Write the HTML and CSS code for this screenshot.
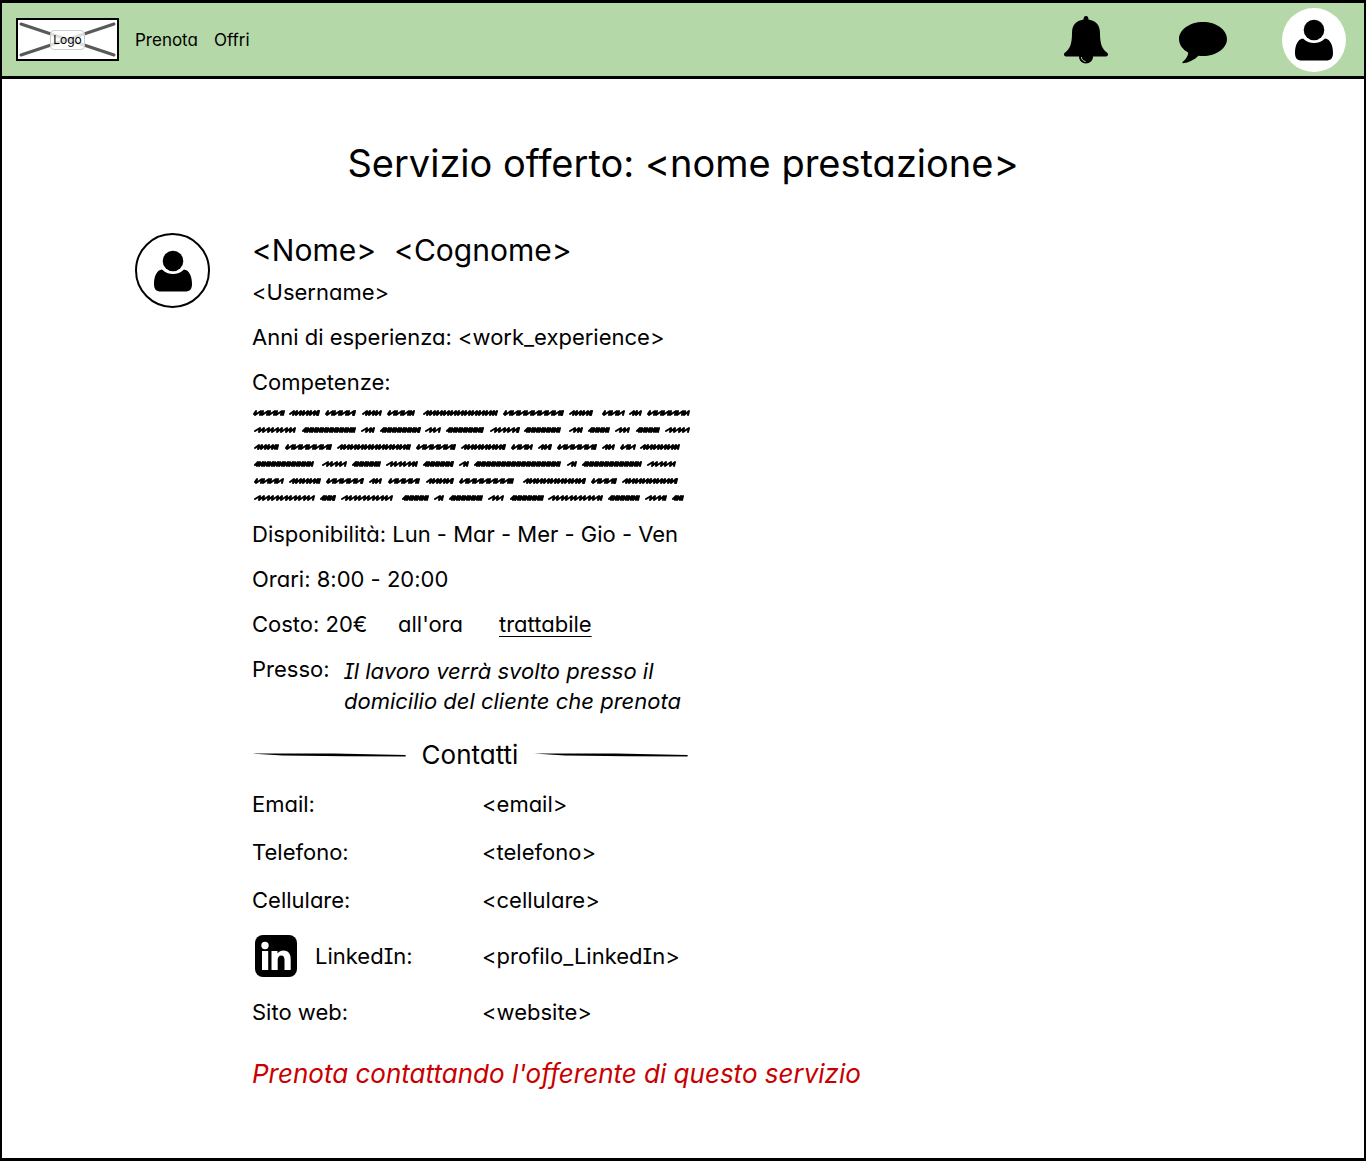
FILE: index.html
```html
<!DOCTYPE html>
<html lang="it">
<head>
<meta charset="utf-8">
<meta name="viewport" content="width=device-width, initial-scale=1">
<title>Servizio offerto</title>
<link rel="stylesheet" href="styles.css">
</head>
<body>
<svg class="symbols" aria-hidden="true">
  <symbol id="user" viewBox="0 0 38 42">
    <circle cx="19" cy="11" r="10.300"/>
    <path d="M8 19.500C11 22.500 15 24 19 24s8-1.500 11-4.500c5 .5 8 6.500 8 14.500 0 5-2 7.500-7 7.500H7c-5 0-7-2.500-7-7.500 0-8 3-14 8-14.500z"/>
  </symbol>
</svg>
<div class="page">
  <header class="topbar">
    <a class="logo" href="#" aria-label="Logo">
      <svg class="logo-cross" viewBox="0 0 99 39" preserveAspectRatio="none" aria-hidden="true"><path d="M3 4 96 35M3 35 96 4"/></svg>
      <span class="logo-text">Logo</span>
    </a>
    <nav class="nav">
      <a href="#">Prenota</a>
      <a href="#">Offri</a>
    </nav>
    <div class="actions">
      <button type="button" class="alerts" aria-label="Notifiche">
        <svg width="44" height="48" viewBox="0 0 44 48"><path d="M22 0c1.500 0 2.500 1 2.500 3.500C32 5 36 9 36 17c0 11 2 16 7.500 20 1 1.500.5 3.500-1.500 3.500H29c0 4-3 7-7 7s-7-3-7-7H2C0 40.500-.5 38.500.5 37 6 33 8 28 8 17 8 9 12 5 19.500 3.500 19.500 1 20.500 0 22 0z"/><path class="bell-line" d="M17.500 41c0 2.500 1.500 4 4 4.500"/></svg>
      </button>
      <button type="button" class="messages" aria-label="Messaggi">
        <svg width="48" height="42" viewBox="0 0 48 42"><path d="M24 0c13.300 0 24 7.600 24 17S37.300 34 24 34c-1.500 0-3 0-4.500-.3C15 38 10 40.500 4 41.200c-.8 0-.8-.9-.2-1.500C7 37 9 34.500 9.200 30.500 3.500 27.500 0 22.500 0 17 0 7.600 10.700 0 24 0z"/></svg>
      </button>
      <button type="button" class="account" aria-label="Profilo">
        <svg width="38" height="42"><use href="#user"/></svg>
      </button>
    </div>
  </header>

  <main class="main">
    <h1>Servizio offerto: &lt;nome prestazione&gt;</h1>
    <article class="profile">
      <div class="avatar"><svg width="38" height="42"><use href="#user"/></svg></div>
      <div class="details">
        <h2 class="name"><span>&lt;Nome&gt;</span><span>&lt;Cognome&gt;</span></h2>
        <p>&lt;Username&gt;</p>
        <p>Anni di esperienza: &lt;work_experience&gt;</p>
        <p>Competenze:</p>
        <svg class="scribble" viewBox="0 0 438 94" role="img" aria-label="Descrizione delle competenze"><path id="scribble-lines"/></svg>
        <p>Disponibilità: Lun - Mar - Mer - Gio - Ven</p>
        <p>Orari: 8:00 - 20:00</p>
        <p class="cost"><span>Costo: 20€</span><span>all'ora</span><a href="#">trattabile</a></p>
        <div class="place"><span>Presso:</span><em>Il lavoro verrà svolto presso il<br>domicilio del cliente che prenota</em></div>
        <h3 class="divider">
          <svg viewBox="0 0 150 4" preserveAspectRatio="none" aria-hidden="true"><path d="M0 .5 80 .6 150 2V3.500L90 3.200 30 2.500z"/></svg>
          <span>Contatti</span>
          <svg viewBox="0 0 150 4" preserveAspectRatio="none" aria-hidden="true"><path d="M0 .5 80 .6 150 2V3.500L90 3.200 30 2.500z"/></svg>
        </h3>
        <dl class="contacts">
          <dt>Email:</dt><dd>&lt;email&gt;</dd>
          <dt>Telefono:</dt><dd>&lt;telefono&gt;</dd>
          <dt>Cellulare:</dt><dd>&lt;cellulare&gt;</dd>
          <dt class="linkedin"><svg width="42" height="42" viewBox="0 0 42 42" aria-hidden="true"><rect width="42" height="42" rx="8"/><g fill="#fff"><circle cx="10" cy="10.500" r="3.700"/><path d="M7 16h6.200v19H7zM16.500 16h6v2.600c1.400-2 3.400-3.100 6-3.100 4.500 0 7.200 3 7.200 8.500v11h-6.200V24.800c0-2.800-1-4.400-3.200-4.400-2.300 0-3.600 1.700-3.600 4.400V35h-6.200z"/></g></svg>LinkedIn:</dt><dd>&lt;profilo_LinkedIn&gt;</dd>
          <dt>Sito web:</dt><dd>&lt;website&gt;</dd>
        </dl>
        <p class="notice">Prenota contattando l'offerente di questo servizio</p>
      </div>
    </article>
  </main>
</div>
<script src="scribble.js"></script>
</body>
</html>
```
FILE: styles.css
```css
* { box-sizing: border-box; }
body {
  margin: 0;
  background: #fff;
  color: #000;
  font: 22px/30px Inter, "Open Sans", sans-serif;
  font-feature-settings: "cv11", "cv08", "calt" 0;
  font-optical-sizing: none;
  font-variant-ligatures: none;
}
h1, h2, h3, p, dl, dd { margin: 0; font-weight: 400; }
a { color: inherit; text-decoration: none; }
svg { display: block; }
.symbols { position: absolute; width: 0; height: 0; }

.page {
  min-height: 100vh;
  border: 2px solid #000;
  border-top-width: 3px;
  border-bottom-width: 3px;
}
.topbar {
  display: flex;
  align-items: center;
  gap: 16px;
  height: 76px;
  padding: 0 18px 0 14px;
  background: #b5d8a8;
  border-bottom: 3px solid #000;
}
.logo {
  display: grid;
  place-items: center;
  width: 103px;
  height: 43px;
  background: #fff;
  border: 2px solid #000;
}
.logo > * { grid-area: 1 / 1; }
.logo-cross {
  width: 100%;
  height: 39px;
  fill: none;
  stroke: #595959;
  stroke-width: 3;
  stroke-linecap: round;
}
.logo-text {
  position: relative;
  padding: 0 2px;
  border: 1px solid #ccc;
  border-radius: 4px;
  background: rgba(255, 255, 255, .8);
  font-size: 12px;
  line-height: 18px;
}
.nav { display: flex; gap: 16px; font-size: 17px; }
.actions {
  display: flex;
  align-items: center;
  gap: 55px;
  margin-left: auto;
}
.actions button {
  display: grid;
  place-items: center;
  padding: 0;
  border: 0;
  background: none;
  color: inherit;
  cursor: pointer;
}
.actions .alerts { margin-right: 16px; }
.actions .messages { padding-top: 6px; }
.actions .account {
  width: 64px;
  height: 64px;
  border-radius: 50%;
  background: #fff;
}
.bell-line { fill: none; stroke: #b5d8a8; stroke-width: 1; }

.main { padding: 60px 133px 56px; }
h1 {
  font-size: 38px;
  line-height: 48px;
  text-align: center;
}
.profile {
  display: grid;
  grid-template-columns: 75px minmax(0, 1fr);
  column-gap: 42px;
  margin-top: 46px;
}
.avatar {
  display: grid;
  place-items: center;
  width: 75px;
  height: 75px;
  border: 2px solid #000;
  border-radius: 50%;
}
.details > * { max-width: 438px; }
.details > p { margin-bottom: 15px; }
.name {
  display: flex;
  gap: 18px;
  margin-bottom: 10px;
  font-size: 30px;
  line-height: 34px;
}
.scribble {
  width: 100%;
  margin: -4px 0 17px;
  fill: none;
  stroke: #000;
  stroke-width: 2;
  stroke-linecap: round;
  stroke-linejoin: round;
}
.cost { display: flex; }
.cost span:first-child { width: 146px; }
.cost a { margin-left: 36px; text-decoration: underline; text-underline-offset: 4px; text-decoration-thickness: 1px; }
.place { display: grid; grid-template-columns: 80px 1fr; gap: 12px; white-space: nowrap; }
.place em { padding-top: 2px; }
.divider {
  display: grid;
  grid-template-columns: 1fr auto 1fr;
  align-items: center;
  gap: 16px;
  margin: 23px 0 18px;
  font-size: 26px;
  line-height: 32px;
}
.details .divider { max-width: 436px; }
.divider svg { width: 100%; height: 4px; }
.contacts {
  display: grid;
  grid-template-columns: 230px 1fr;
  align-items: center;
  row-gap: 18px;
}
.linkedin { display: flex; align-items: center; gap: 18px; padding: 2px 3px; }
.details .notice {
  max-width: none;
  margin: 30px 0 0;
  color: #c80000;
  font-size: 26px;
  line-height: 34px;
  font-style: italic;
}
```
FILE: scribble.js
```js
// Each row lists the start and end of every scribbled word.
const rows = [
  [0,32, 36,67, 72,103, 109,129, 134,162, 170,245, 250,311, 316,340, 349,372, 376,389, 394,437],
  [1,43, 49,103, 108,122, 127,168, 172,188, 193,231, 237,267, 271,308, 316,330, 335,357, 362,377, 383,407, 412,437],
  [1,26, 32,79, 84,158, 163,203, 208,253, 258,280, 285,299, 304,344, 349,362, 367,383, 387,427],
  [1,61, 69,94, 99,128, 133,165, 170,201, 206,216, 221,308, 314,324, 329,389, 394,423],
  [1,31, 36,68, 73,111, 116,129, 135,167, 173,201, 206,261, 270,333, 338,364, 369,425],
  [1,62, 67,83, 88,140, 149,176, 181,191, 196,230, 235,251, 257,291, 295,350, 355,387, 392,414, 419,431]
];
let path = "";
rows.forEach((row, r) => {
  const y = 5 + r * 17;
  for (let i = 0; i < row.length; i += 2) {
    let x = row[i] + 2;
    const end = row[i + 1];
    path += `M${x} ${y + 1}`;
    for (let k = 0; x < end; k++) {
      const step = 2 + (k * k * 7 + i + r * 3) % 4;
      const peak = Math.min(x + step, end);
      path += `L${peak} ${y - 2}L${peak - 1} ${y + 2}`;
      x = peak;
    }
  }
});
document.getElementById("scribble-lines").setAttribute("d", path);
```
